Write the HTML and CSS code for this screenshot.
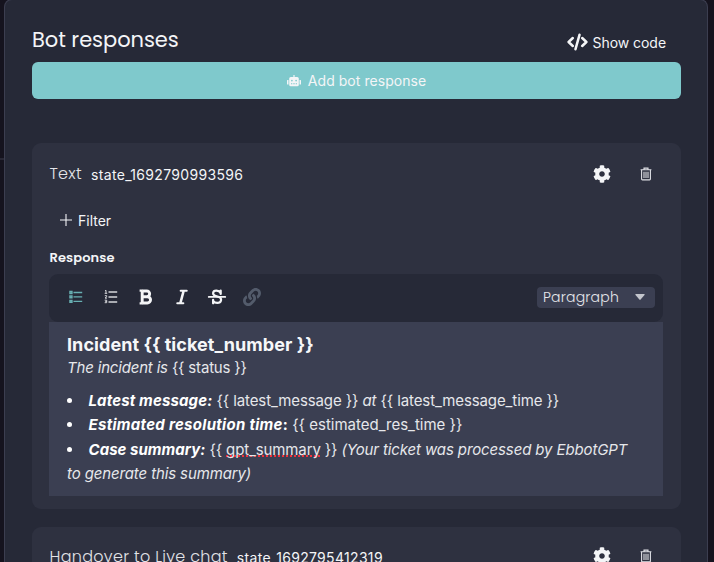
FILE: index.html
```html
<!DOCTYPE html>
<html lang="en">
<head>
<meta charset="utf-8">
<title>Bot responses</title>
<link rel="stylesheet" href="styles.css">
</head>
<body>
<svg class="defs" width="0" height="0">
  <symbol id="cog" viewBox="0 0 512 512"><path fill="currentColor" d="M487.4 315.7l-42.6-24.6c4.3-23.2 4.3-47 0-70.2l42.6-24.6c4.9-2.8 7.1-8.6 5.5-14-11.1-35.6-30-67.8-54.7-94.6-3.8-4.1-10-5.1-14.8-2.3L380.8 110c-17.9-15.4-38.5-27.3-60.8-35.1V25.8c0-5.6-3.9-10.5-9.4-11.7-36.7-8.2-74.3-7.8-109.2 0-5.5 1.2-9.4 6.1-9.4 11.7V75c-22.2 7.9-42.8 19.8-60.8 35.1L88.7 85.5c-4.9-2.8-11-1.9-14.8 2.3-24.7 26.7-43.6 58.9-54.7 94.6-1.7 5.4.6 11.2 5.5 14L67.3 221c-4.3 23.2-4.3 47 0 70.2l-42.6 24.6c-4.9 2.8-7.1 8.6-5.5 14 11.1 35.6 30 67.8 54.7 94.6 3.8 4.1 10 5.1 14.8 2.3l42.6-24.6c17.9 15.4 38.5 27.3 60.8 35.1v49.2c0 5.6 3.9 10.5 9.4 11.7 36.7 8.2 74.3 7.8 109.2 0 5.5-1.2 9.4-6.1 9.4-11.7v-49.2c22.2-7.9 42.8-19.8 60.8-35.1l42.6 24.6c4.9 2.8 11 1.9 14.8-2.3 24.7-26.7 43.6-58.9 54.7-94.6 1.5-5.5-.7-11.3-5.6-14.1zM256 336c-44.1 0-80-35.9-80-80s35.9-80 80-80 80 35.9 80 80-35.9 80-80 80z"/></symbol>
  <symbol id="trash" viewBox="0 0 12 14"><path fill="none" stroke="currentColor" stroke-width="1.1" d="M.6 2.7h10.8M4 2.5V1.1h4v1.4M1.6 3v9.1q0 .8.8.8h7.2q.8 0 .8-.8V3M4 4.8v6.2M6 4.8v6.2M8 4.8v6.2"/></symbol>
</svg>
<main class="panel">
  <header class="head">
    <h1 class="title">Bot responses</h1>
    <button class="show-code">
      <svg width="21" height="18" viewBox="0 0 21 18" fill="none" stroke="currentColor" stroke-linecap="round" stroke-linejoin="round" stroke-width="2.5"><path d="M5.8 5 1.6 9l4.2 4M15.2 5l4.2 4-4.2 4M12.5 1.8 8.5 16.2"/></svg>
      <span>Show code</span>
    </button>
  </header>
  <button class="add">
    <svg width="14" height="12" viewBox="0 0 14 12"><path fill="currentColor" fill-rule="evenodd" d="M6.4 0h1.2v2h2.6q1.6 0 1.6 1.6v6.2q0 1.5-1.5 1.5H3.7q-1.5 0-1.5-1.5V3.6Q2.200 2 3.800 2h2.600zM0 5.600q0-.5.5-.5h1v4.500h-1q-.5 0-.5-.5zM12.500 5.100h1q.5 0 .5.5v3.500q0 .5-.5.5h-1zM4.900 4.700a.85.85 0 1 0 0 1.700.85.85 0 0 0 0-1.700M9.100 4.700a.85.85 0 1 0 0 1.700.85.85 0 0 0 0-1.700M4 8.300v1h1.300v-1zM6.300 8.300v1h1.400v-1zM8.700 8.300v1H10v-1z"/></svg>
    <span>Add bot response</span>
  </button>

  <section class="card">
    <div class="card-head">
      <h2 class="kind kind-text">Text</h2><span class="state">state_1692790993596</span>
      <div class="actions"><svg width="18" height="18"><use href="#cog"/></svg><svg class="trash" width="12" height="14"><use href="#trash"/></svg></div>
    </div>
    <button class="filter"><svg width="12" height="12" viewBox="0 0 12 12" stroke="currentColor" stroke-width="1.1"><path d="M0 6h12M6 0v12"/></svg><span>Filter</span></button>
    <h3 class="label">Response</h3>
    <div class="toolbar">
      <div class="tools">
        <svg class="active" width="20" height="20" viewBox="0 0 20 20" fill="none" stroke="currentColor"><path stroke-width="1.3" d="M7.500 5.500h8.700M7.500 9.900h8.700M7.500 14.300h8.700"/><path stroke-width="1.500" d="M4 4.600h1.900v1.800H4zM4 9h1.900v1.800H4zM4 13.400h1.900v1.800H4z"/></svg>
        <svg class="numbered" width="20" height="20" viewBox="0 0 20 20" fill="none" stroke="currentColor"><path stroke-width="1.300" d="M7.500 5h8.700M7.500 10h8.700M7.500 15h8.700"/><path stroke-width="1" d="M4 3.900l1-.6v3M3.700 6.300h2.500M3.800 8.700h1.900v1l-1.700 1.400h2M3.700 13.200h2v2.500h-2M4.200 14.400h1.500"/></svg>
        <svg width="20" height="20" viewBox="0 0 20 20" fill="none" stroke="currentColor" stroke-width="2.900"><path d="M6.200 3.700v12.600M6.200 4h4.600a2.850 2.850 0 0 1 0 5.700H6.200M6.200 9.700h5.200a3.150 3.150 0 0 1 0 6.300H6.200"/><path stroke-width="2.200" d="M3.600 3.700h3M3.600 16.300h3"/></svg>
        <svg width="20" height="20" viewBox="0 0 20 20" fill="none" stroke="currentColor"><path stroke-width="2.600" d="M11.600 4 8.400 16"/><path stroke-width="2.100" stroke-linecap="round" d="M8.700 3.800h6M5.300 16.200h6"/></svg>
        <svg width="20" height="20" viewBox="0 0 20 20" fill="none" stroke="currentColor" stroke-linecap="round"><path stroke-width="2.200" d="M13.700 7V3.500M13.600 5.900C12.300 3.300 6.500 2.500 6.100 6.100c-.2 1.900 2 2.800 4.400 3.400 2.200.6 4.100 1.600 3.500 4-.9 3.400-6.300 3-7.700.4M6.100 12.800v3.500"/><path stroke-width="1.900" d="M1.800 9.900h16.400"/></svg>
        <svg class="off" width="18" height="18" viewBox="0 0 512 512"><path fill="currentColor" d="M326.612 185.391c59.747 59.809 58.927 155.698.36 214.59-.11.12-.24.25-.36.37l-67.2 67.2c-59.27 59.27-155.699 59.262-214.96 0-59.27-59.26-59.27-155.7 0-214.96l37.106-37.106c9.84-9.84 26.786-3.3 27.294 10.606.648 17.722 3.826 35.527 9.69 52.721 1.986 5.822.567 12.262-3.783 16.612l-13.087 13.087c-28.026 28.026-28.905 73.66-1.155 101.96 28.024 28.579 74.086 28.749 102.325.51l67.2-67.19c28.191-28.191 28.073-73.757 0-101.83-3.701-3.694-7.429-6.564-10.341-8.569a16.037 16.037 0 0 1-6.947-12.606c-.396-10.567 3.348-21.456 11.698-29.806l21.054-21.055c5.521-5.521 14.182-6.199 20.584-1.731a152.482 152.482 0 0 1 20.522 17.197zM467.547 44.449c-59.261-59.262-155.69-59.27-214.96 0l-67.2 67.2c-.12.12-.25.25-.36.37-58.566 58.892-59.387 154.781.36 214.59a152.454 152.454 0 0 0 20.521 17.196c6.402 4.468 15.064 3.789 20.584-1.731l21.054-21.055c8.35-8.35 12.094-19.239 11.698-29.806a16.037 16.037 0 0 0-6.947-12.606c-2.912-2.005-6.64-4.875-10.341-8.569-28.073-28.073-28.191-73.639 0-101.83l67.2-67.19c28.239-28.239 74.3-28.069 102.325.51 27.75 28.3 26.872 73.934-1.155 101.96l-13.087 13.087c-4.35 4.35-5.769 10.79-3.783 16.612 5.864 17.194 9.042 34.999 9.69 52.721.509 13.906 17.454 20.446 27.294 10.606l37.106-37.106c59.271-59.259 59.271-155.699.001-214.959z"/></svg>
      </div>
      <button class="select"><span>Paragraph</span><svg width="10" height="6" viewBox="0 0 10 6"><path fill="currentColor" d="M.8 0h8.400q.8.200.3 1L5.600 5.600q-.6.600-1.200 0L.500 1Q0 .200.800 0z"/></svg></button>
    </div>
    <div class="editor">
      <h4 class="incident">Incident {{ ticket_number }}</h4>
      <p class="status"><em>The incident is</em> {{ status }}</p>
      <ul class="list">
        <li class="latest"><b><i>Latest message:</i></b> {{ latest_message }} <em>at</em> {{ latest_message_time }}</li>
        <li class="estimate"><b><i>Estimated resolution time</i>:</b> {{ estimated_res_time }}</li>
        <li class="summary"><b><i>Case summary:</i></b> {{ <span class="spell">gpt_summary</span> }} <em>(Your ticket was processed by EbbotGPT<br>to generate this summary)</em></li>
      </ul>
    </div>
  </section>

  <section class="card card-next">
    <div class="card-head">
      <h2 class="kind kind-handover">Handover to Live chat</h2><span class="state">state_1692795412319</span>
      <div class="actions"><svg width="18" height="18"><use href="#cog"/></svg><svg class="trash" width="12" height="14"><use href="#trash"/></svg></div>
    </div>
  </section>
</main>
</body>
</html>
```
FILE: styles.css
```css
* { box-sizing: border-box; }
html { overflow: hidden; }
body {
  margin: 0;
  height: 562px;
  overflow: hidden;
  padding: 0 6px 0 4px;
  background: linear-gradient(#292835, #292835) 0 158px / 4px 2px no-repeat, #15131e;
  color: #f4f5f7;
  font-family: Inter, "Liberation Sans", sans-serif;
  font-size: 14px;
}
h1, h2, h3, h4, p, ul { margin: 0; padding: 0; font-weight: 400; }
button { border: 0; padding: 0; background: none; color: inherit; font: inherit; display: flex; align-items: center; }
svg { display: block; flex: none; }
.defs { position: absolute; }
.panel {
  height: 563px;
  overflow: hidden;
  margin-top: -1px;
  border: 1px solid #3c3e50;
  border-bottom: 0;
  border-radius: 8px 8px 0 0;
  background: #262937;
  padding: 0 26px 0 27px;
}
.head { height: 62px; display: flex; justify-content: space-between; padding-right: 15px; }
.title, .kind, .label, .select { font-family: Poppins, Inter, sans-serif; }
.title { font-size: 21px; line-height: 30px; margin-top: 25px; letter-spacing: -.05px; }
.show-code { height: 20px; gap: 5px; margin-top: 32px; letter-spacing: -.05px; }
.add { width: 100%; height: 37px; border-radius: 6px; background: #7fc9cc; justify-content: center; gap: 7px; letter-spacing: .05px; margin-bottom: 44px; }
.card { background: #2e3140; border-radius: 9px; height: 366px; padding: 0 18px 0 17px; margin-bottom: 18px; }
.card-head { display: flex; align-items: center; height: 61px; }
.card-next .card-head { height: 58px; }
.kind { font-size: 16px; font-weight: 300; color: #e2e3e8; letter-spacing: .3px; margin-left: .5px; }
.state { margin: 2px 0 0 9px; letter-spacing: .32px; }
.actions { margin-left: auto; display: flex; align-items: center; gap: 29px; padding-right: 11px; }
.trash { color: #e0e1e6; }
.filter { height: 20px; margin: 6px 0 0 11px; gap: 6px; }
.label { font-size: 13px; font-weight: 600; line-height: 20px; margin: 18px 0 0 .5px; height: 26px; letter-spacing: .1px; }
.toolbar { height: 48px; border-radius: 9px; background: #262937; display: flex; align-items: center; justify-content: space-between; padding: 0 8px 2px 17px; }
.tools { display: flex; align-items: center; gap: 15.200px; }
.active { color: #68b0b3; }
.numbered { color: #d5d6da; }
.off { color: #535b6b; margin-left: 1px; }
.select { width: 118px; height: 21px; border-radius: 4px; background: #3b3f52; padding: 0 10px 0 6px; justify-content: space-between; font-weight: 300; letter-spacing: .2px; color: #e7e8ec; }
.select svg { color: #c3c5cc; }
.editor { height: 174px; background: #3b3f52; padding: 10px 18px 0; font-size: 15px; font-weight: 300; color: #e6e7eb; }
.incident { font-size: 18px; line-height: 26px; font-weight: 700; letter-spacing: .06px; color: #f6f7f9; }
.status { line-height: 20px; margin-bottom: 11px; letter-spacing: -.18px; }
.list { list-style: none; line-height: 24.300px; white-space: nowrap; }
.list li::before { content: ""; display: inline-block; width: 5px; height: 5px; border-radius: 50%; background: #fff; margin-right: 16.500px; vertical-align: 3px; }
.editor b { font-weight: 700; color: #fff; }
.latest { letter-spacing: -.1px; }
.latest b { letter-spacing: .14px; }
.estimate b { letter-spacing: .29px; }
.summary { letter-spacing: -.12px; }
.summary b { letter-spacing: .04px; }
.spell { text-decoration: underline dotted #f0323c 2px; text-decoration-skip-ink: none; text-underline-offset: 1px; }
```
